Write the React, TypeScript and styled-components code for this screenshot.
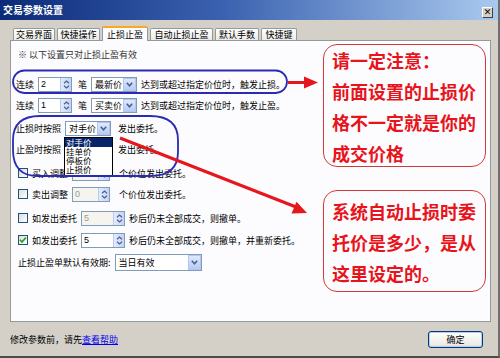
import React from "react";
import styled, { createGlobalStyle } from "styled-components";

const GlobalStyle = createGlobalStyle`
  html, body { margin: 0; padding: 0; background: #d4d0c8; }
  body { font-family: "Noto Sans CJK SC", "Noto Sans", sans-serif; }
  * { box-sizing: border-box; }
`;

const cjk = `"Noto Sans CJK SC", "Noto Sans", sans-serif`;

const Window = styled.div`
  position: relative;
  width: 500px;
  height: 358px;
  background: #d4d0c8;
  display: flex;
  flex-direction: column;
  overflow: hidden;
  border-right: 2px solid #6f6f6f;
  border-bottom: 2px solid #4a4a4a;
  font-family: ${cjk};
  font-size: 9px;
  color: #000;
`;

const TitleBar = styled.div`
  height: 20px;
  flex: none;
  display: flex;
  align-items: center;
  justify-content: space-between;
  padding: 0 5px 0 3px;
  background: linear-gradient(to right, #0b2a78 0%, #3b62b0 45%, #a9c9ee 100%);
`;

const TitleText = styled.span`
  color: #fff;
  font-size: 10px;
  font-weight: 700;
  line-height: 1;
`;

const CloseBtn = styled.div`
  width: 11px;
  height: 11px;
  margin-top: 4px;
  background: #d4d0c8;
  border: 1px solid;
  border-color: #fff #404040 #404040 #fff;
  display: flex;
  align-items: center;
  justify-content: center;
  font-family: "DejaVu Sans", sans-serif;
  font-size: 9px;
  font-weight: 700;
  line-height: 1;
`;

const TabsRow = styled.div`
  flex: none;
  height: 15px;
  margin-top: 5px;
  padding-left: 13px;
  display: flex;
  align-items: flex-end;
  gap: 2px;
`;

const Tab = styled.div<{ $w: number; $active?: boolean }>`
  width: ${(p) => p.$w}px;
  height: ${(p) => (p.$active ? 15 : 12)}px;
  display: flex;
  align-items: center;
  justify-content: center;
  font-size: 9px;
  line-height: 1;
  border: 1px solid #919b9c;
  border-bottom: none;
  border-radius: 2px 2px 0 0;
  background: ${(p) =>
    p.$active ? "#fcfcfe" : "linear-gradient(#ffffff, #ecebe6)"};
  border-top: ${(p) => (p.$active ? "2px solid #f5a82a" : "1px solid #919b9c")};
  position: relative;
  z-index: ${(p) => (p.$active ? 2 : 1)};
  margin-bottom: ${(p) => (p.$active ? -1 : 0)}px;
`;

const Panel = styled.div`
  flex: none;
  width: 481px;
  height: 282px;
  margin-left: 10px;
  background: #fcfcfe;
  border: 1px solid #919b9c;
  padding: 5px 0 0 5px;
  display: flex;
  flex-direction: column;
`;

const Row = styled.div<{ $mt: number; $h?: number }>`
  display: flex;
  align-items: center;
  gap: 4px;
  height: ${(p) => p.$h ?? 20}px;
  margin-top: ${(p) => p.$mt}px;
  white-space: nowrap;
  line-height: 1;
`;

const Note = styled.span`
  color: #333;
  margin-left: 2px;
`;

const Label = styled.span<{ $ml?: number }>`
  margin-left: ${(p) => p.$ml ?? 0}px;
`;

const SpinBox = styled.div<{ $w: number; $disabled?: boolean }>`
  width: ${(p) => p.$w}px;
  height: 15px;
  display: flex;
  border: 1px solid #7f9db9;
  background: ${(p) => (p.$disabled ? "#f5f4ef" : "#fff")};
`;

const SpinValue = styled.span<{ $disabled?: boolean }>`
  flex: 1;
  display: flex;
  align-items: center;
  padding-left: 2px;
  font-family: "Liberation Sans", sans-serif;
  font-size: 9px;
  color: ${(p) => (p.$disabled ? "#9a9a9a" : "#000")};
`;

const SpinBtn = styled.div`
  width: 11px;
  flex: none;
  display: flex;
  align-items: center;
  justify-content: center;
  background: linear-gradient(to right, #e3ebfd, #c3d3f7);
  border-left: 1px solid #b8c9ef;
`;

const SelectBox = styled.div<{ $w: number; $h?: number }>`
  position: relative;
  width: ${(p) => p.$w}px;
  height: ${(p) => p.$h ?? 15}px;
  display: flex;
  border: 1px solid #7f9db9;
  background: #fff;
`;

const SelectText = styled.span`
  flex: 1;
  display: flex;
  align-items: center;
  padding-left: 3px;
`;

const SelectBtn = styled.div`
  width: 13px;
  flex: none;
  display: flex;
  align-items: center;
  justify-content: center;
  background: linear-gradient(#dfe8fd, #b7cbf6);
  border: 1px solid #b4c6ef;
`;

const DropList = styled.div`
  position: absolute;
  left: -2px;
  top: 15px;
  width: 49px;
  background: #fff;
  border: 1px solid #000;
  z-index: 5;
  display: flex;
  flex-direction: column;
`;

const DropItem = styled.div<{ $sel?: boolean }>`
  height: 9.25px;
  display: flex;
  align-items: center;
  font-size: 8.5px;
  line-height: 9px;
  padding-left: 1px;
  background: ${(p) => (p.$sel ? "#0a246a" : "#fff")};
  color: ${(p) => (p.$sel ? "#fff" : "#000")};
`;

const Check = styled.div`
  width: 10px;
  height: 10px;
  margin-left: 2px;
  border: 1px solid #1c5180;
  background: linear-gradient(135deg, #dcdcd7, #ffffff);
  display: flex;
  align-items: center;
  justify-content: center;
`;

const Footer = styled.div`
  flex: 1;
  display: flex;
  align-items: center;
  justify-content: space-between;
  padding: 0 15px 0 10px;
`;

const FooterText = styled.span`
  font-size: 9px;
`;

const HelpLink = styled.span`
  color: #0000ee;
  text-decoration: underline;
`;

const OkButton = styled.div`
  width: 55px;
  height: 17px;
  display: flex;
  align-items: center;
  justify-content: center;
  border: 1px solid #003c74;
  border-radius: 3px;
  background: linear-gradient(#ffffff, #ecebe6 85%, #d6d0c5);
  box-shadow: inset 0 0 0 1px #b7cbf3;
  font-size: 9px;
`;

const Overlay = styled.svg`
  position: absolute;
  left: 0;
  top: 0;
  pointer-events: none;
  z-index: 10;
`;

const Callout = styled.div<{ $top: number; $h: number; $pt: number }>`
  position: absolute;
  left: 323px;
  top: ${(p) => p.$top}px;
  width: 163px;
  height: ${(p) => p.$h}px;
  border: 1.5px solid #d23a3a;
  border-radius: 14px;
  padding: ${(p) => p.$pt}px 0 0 8px;
  color: #e8141c;
  font-family: ${cjk};
  font-weight: 700;
  font-size: 18px;
  line-height: 31px;
  white-space: nowrap;
  z-index: 11;
`;

const SpinArrows = () => (
  <svg width="7" height="9" viewBox="0 0 7 9">
    <path d="M1 3.2 L3.5 1 L6 3.2 M1 5.8 L3.5 8 L6 5.8" fill="none" stroke="#4d6185" strokeWidth="1.2" />
  </svg>
);

const Chevron = () => (
  <svg width="7" height="5" viewBox="0 0 7 5">
    <path d="M0.8 0.8 L3.5 3.8 L6.2 0.8" fill="none" stroke="#4d6185" strokeWidth="1.6" />
  </svg>
);

const CheckMark = () => (
  <svg width="8" height="8" viewBox="0 0 8 8">
    <path d="M1 3.8 L3 6 L7 1.5" fill="none" stroke="#21a121" strokeWidth="1.7" />
  </svg>
);

const Spinner = ({ value, w, disabled }: { value: string; w: number; disabled?: boolean }) => (
  <SpinBox $w={w} $disabled={disabled}>
    <SpinValue $disabled={disabled}>{value}</SpinValue>
    <SpinBtn>
      <SpinArrows />
    </SpinBtn>
  </SpinBox>
);

const Select = ({
  value,
  w,
  h,
  options,
}: {
  value: string;
  w: number;
  h?: number;
  options?: string[];
}) => (
  <SelectBox $w={w} $h={h}>
    <SelectText>{value}</SelectText>
    <SelectBtn>
      <Chevron />
    </SelectBtn>
    {options && (
      <DropList>
        {options.map((o, i) => (
          <DropItem key={o} $sel={i === 0}>
            {o}
          </DropItem>
        ))}
      </DropList>
    )}
  </SelectBox>
);

const tabs = [
  { t: "交易界面", w: 42 },
  { t: "快捷操作", w: 43 },
  { t: "止损止盈", w: 46, a: true },
  { t: "自动止损止盈", w: 63 },
  { t: "默认手数", w: 44 },
  { t: "快捷键", w: 36 },
];

export default function App() {
  return (
    <>
      <GlobalStyle />
      <Window>
        <TitleBar>
          <TitleText>交易参数设置</TitleText>
          <CloseBtn>✕</CloseBtn>
        </TitleBar>
        <TabsRow>
          {tabs.map((t) => (
            <Tab key={t.t} $w={t.w} $active={t.a}>
              {t.t}
            </Tab>
          ))}
        </TabsRow>
        <Panel>
          <Row $mt={1} $h={14}>
            <Note>※ 以下设置只对止损止盈有效</Note>
          </Row>
          <Row $mt={13}>
            <Label>连续</Label>
            <Spinner value="2" w={34} />
            <Label $ml={2}>笔</Label>
            <Select value="最新价" w={46} />
            <Label>达到或超过指定价位时，触发止损。</Label>
          </Row>
          <Row $mt={1}>
            <Label>连续</Label>
            <Spinner value="1" w={34} />
            <Label $ml={2}>笔</Label>
            <Select value="买卖价" w={46} />
            <Label>达到或超过指定价位时，触发止盈。</Label>
          </Row>
          <Row $mt={3}>
            <Label>止损时按照</Label>
            <Select value="对手价" w={46} options={["对手价", "挂单价", "停板价", "止损价"]} />
            <Label $ml={3}>发出委托。</Label>
          </Row>
          <Row $mt={1}>
            <Label>止盈时按照</Label>
            <Select value="对手价" w={46} />
            <Label $ml={3}>发出委托。</Label>
          </Row>
          <Row $mt={4}>
            <Check />
            <Label>买入调整</Label>
            <Spinner value="0" w={38} disabled />
            <Label $ml={5}>个价位发出委托。</Label>
          </Row>
          <Row $mt={1}>
            <Check />
            <Label>卖出调整</Label>
            <Spinner value="0" w={38} disabled />
            <Label $ml={5}>个价位发出委托。</Label>
          </Row>
          <Row $mt={4}>
            <Check />
            <Label>如发出委托</Label>
            <Spinner value="5" w={44} disabled />
            <Label>秒后仍未全部成交，则撤单。</Label>
          </Row>
          <Row $mt={2}>
            <Check>
              <CheckMark />
            </Check>
            <Label>如发出委托</Label>
            <Spinner value="5" w={44} />
            <Label>秒后仍未全部成交，则撤单，并重新委托。</Label>
          </Row>
          <Row $mt={2}>
            <Label $ml={2}>止损止盈单默认有效期:</Label>
            <Select value="当日有效" w={87} h={17} />
          </Row>
        </Panel>
        <Footer>
          <FooterText>
            修改参数前，请先<HelpLink>查看帮助</HelpLink>
          </FooterText>
          <OkButton>确定</OkButton>
        </Footer>

        <Overlay width="500" height="358" viewBox="0 0 500 358">
          <rect x="13" y="70.5" width="274" height="22.5" rx="11.25" fill="none" stroke="#2a2ab4" strokeWidth="1.8" />
          <path
            d="M40 116 H150 Q178 116 178 140 V152 Q178 176 150 176 H38 Q13 176 13 150 V140 Q13 116 40 116 Z"
            fill="none"
            stroke="#2a2ab4"
            strokeWidth="1.8"
          />
          <line x1="288" y1="82.5" x2="306" y2="82.5" stroke="#e5161c" strokeWidth="3" />
          <polygon points="304,76.5 318,82.5 304,88.5" fill="#e5161c" />
          <line x1="120" y1="138" x2="296" y2="207" stroke="#e5161c" strokeWidth="3" />
          <polygon points="296.5,201.8 307,213 291.5,213.6" fill="#e5161c" />
        </Overlay>
        <Callout $top={44} $h={123} $pt={0}>
          请一定注意：
          <br />
          前面设置的止损价
          <br />
          格不一定就是你的
          <br />
          成交价格
        </Callout>
        <Callout $top={190} $h={102} $pt={5}>
          系统自动止损时委
          <br />
          托价是多少，是从
          <br />
          这里设定的。
        </Callout>
      </Window>
    </>
  );
}
